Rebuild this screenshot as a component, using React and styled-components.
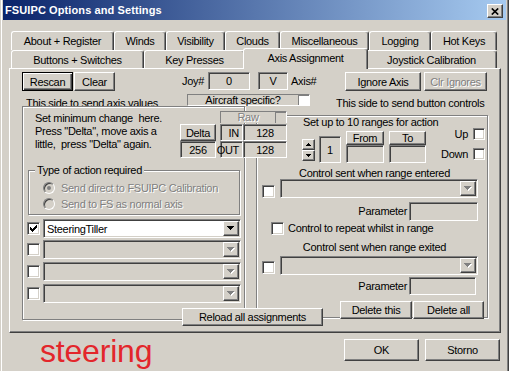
import React from 'react';
import styled, { createGlobalStyle, css } from 'styled-components';

const FACE = '#d4d0c8';
const SHADOW = '#808080';
const DARK = '#404040';

const GlobalStyle = createGlobalStyle`
  html, body { margin: 0; padding: 0; background: ${FACE}; }
  body {
    font-family: "Liberation Sans", Arial, sans-serif;
    font-size: 11px;
    letter-spacing: -0.3px;
    color: #000;
  }
  *, *::before, *::after { box-sizing: border-box; }
`;

const raised = css`
  border: 1px solid;
  border-color: #fff ${DARK} ${DARK} #fff;
  box-shadow: inset -1px -1px ${SHADOW};
  background: ${FACE};
`;
const sunken = css`
  border: 1px solid;
  border-color: ${SHADOW} #fff #fff ${SHADOW};
  box-shadow: inset 1px 1px ${DARK}, inset -1px -1px ${FACE};
`;
const etched = css`
  border: 1px solid ${SHADOW};
  box-shadow: inset 1px 1px #fff, 1px 1px #fff;
`;
const disabledText = css`
  color: ${SHADOW};
  text-shadow: 1px 1px #fff;
`;
const space = css`
  margin-left: ${p => p.$ml || 0}px;
  margin-top: ${p => p.$mt || 0}px;
`;

const Window = styled.div`
  width: 509px;
  height: 371px;
  overflow: hidden;
  background: ${FACE};
  display: flex;
  flex-direction: column;
  box-shadow: inset 1px 0 ${FACE}, inset 2px 0 #fff, inset -1px 0 ${DARK}, inset -2px 0 ${SHADOW};
`;

const TitleBar = styled.div`
  flex-shrink: 0;
  height: 20px;
  margin: 0 3px;
  padding: 0 3px 0 2px;
  display: flex;
  align-items: flex-start;
  background: linear-gradient(to right, #0a246a 0%, #a6caf0 100%);
`;
const TitleText = styled.span`
  color: #fff;
  font-weight: bold;
  font-size: 11px;
  letter-spacing: 0.1px;
  line-height: 20px;
`;
const CloseBox = styled.div`
  margin-left: auto;
  margin-top: 4px;
  width: 16px;
  height: 14px;
  ${raised};
  display: flex;
  align-items: center;
  justify-content: center;
`;

const TabStrip = styled.div`
  position: relative;
  z-index: 1;
  margin-top: 11px;
  display: flex;
  flex-direction: column;
  flex-shrink: 0;
`;
const TabRow = styled.div`
  display: flex;
  align-items: flex-end;
  margin-left: 11px;
  height: ${p => p.$h}px;
`;
const Tab = styled.div`
  position: relative;
  flex-shrink: 0;
  width: ${p => p.$w + (p.$active ? 4 : 0)}px;
  height: ${p => (p.$active ? 21 : p.$h)}px;
  border-top: 1px solid #fff;
  border-left: 1px solid #fff;
  border-right: 1px solid ${DARK};
  box-shadow: inset -1px 0 ${SHADOW};
  border-radius: 3px 3px 0 0;
  background: ${FACE};
  display: flex;
  align-items: center;
  justify-content: center;
  white-space: nowrap;
  ${p => p.$active && css`
    margin: 0 -2px -1px;
    z-index: 2;
    padding-bottom: 3px;
  `}
`;

const Panel = styled.div`
  flex-shrink: 0;
  margin-left: 9px;
  width: 492px;
  height: 265px;
  border-top: 1px solid #fff;
  border-left: 1px solid #fff;
  border-right: 1px solid ${DARK};
  border-bottom: 1px solid ${DARK};
  box-shadow: inset -1px -1px ${SHADOW};
  display: flex;
  flex-direction: column;
`;

const Row = styled.div`
  ${space};
  display: flex;
  align-items: flex-start;
  flex-shrink: 0;
  height: ${p => p.$h}px;
`;

const Button = styled.div`
  ${space};
  flex-shrink: 0;
  width: ${p => (p.$w ? `${p.$w}px` : 'auto')};
  height: ${p => p.$h || 19}px;
  ${raised};
  display: flex;
  align-items: center;
  justify-content: center;
  white-space: nowrap;
  ${p => p.$default && css`
    border-color: #000;
    box-shadow: inset 1px 1px #fff, inset -1px -1px ${DARK}, inset -2px -2px ${SHADOW};
  `}
  ${p => p.$disabled && disabledText}
  ${p => p.$area && `grid-area: ${p.$area};`}
`;

const Field = styled.div`
  ${space};
  flex-shrink: 0;
  width: ${p => (p.$w ? `${p.$w}px` : 'auto')};
  height: ${p => (p.$h ? `${p.$h}px` : 'auto')};
  ${sunken};
  background: ${p => (p.$white ? '#fff' : FACE)};
  display: flex;
  align-items: center;
  justify-content: ${p => p.$justify || 'center'};
  padding: 0 3px;
  ${p => p.$area && `grid-area: ${p.$area};`}
`;

const Label = styled.div`
  ${space};
  flex-shrink: 0;
  width: ${p => (p.$w ? `${p.$w}px` : 'auto')};
  line-height: ${p => p.$lh || 13}px;
  text-align: ${p => p.$align || 'left'};
  padding-left: ${p => p.$pl || 0}px;
  white-space: pre;
  ${p => p.$disabled && disabledText}
`;

const AircraftBox = styled.div`
  flex-shrink: 0;
  width: 123px;
  height: 12px;
  border-top: 1px solid ${SHADOW};
  border-left: 1px solid ${SHADOW};
  border-bottom: 1px solid #fff;
  border-right: 1px solid #fff;
  display: flex;
  align-items: center;
`;
const BoxText = styled.span`
  flex: 1;
  text-align: center;
  line-height: 10px;
  ${p => p.$disabled && disabledText}
`;
const MiniCheck = styled.div`
  flex-shrink: 0;
  width: 11px;
  height: 100%;
  background: ${p => (p.$white ? '#fff' : FACE)};
  border-left: 1px solid ${SHADOW};
  border-top: 1px solid ${SHADOW};
`;

const Body = styled.div`
  flex-shrink: 0;
  display: flex;
  align-items: flex-start;
  margin-left: 12px;
  height: 214px;
`;
const LeftFrame = styled.div`
  flex-shrink: 0;
  width: 223px;
  height: 214px;
  ${etched};
  display: flex;
  flex-direction: column;
`;
const RightFrame = styled.div`
  flex-shrink: 0;
  margin-left: 11px;
  margin-top: 9px;
  width: 232px;
  height: 203px;
  ${etched};
  display: flex;
  flex-direction: column;
`;

const DeltaGrid = styled.div`
  position: relative;
  z-index: 2;
  flex-shrink: 0;
  margin-top: 4px;
  display: grid;
  grid-template-columns: 36px 4px 23px 44px;
  grid-template-rows: 12px 1px 17px 17px;
`;
const RawBox = styled.div`
  grid-area: 1 / 3 / 2 / 5;
  border-top: 1px solid ${SHADOW};
  border-left: 1px solid ${SHADOW};
  border-right: 1px solid #fff;
  background: ${FACE};
  display: flex;
  align-items: stretch;
`;

const GroupBox = styled.div`
  ${space};
  position: relative;
  flex-shrink: 0;
  width: ${p => p.$w}px;
  height: ${p => p.$h}px;
  ${etched};
  display: flex;
  flex-direction: column;
`;
const Legend = styled.span`
  position: absolute;
  top: -7px;
  left: 6px;
  padding: 0 2px;
  line-height: 13px;
  background: ${FACE};
  white-space: nowrap;
`;
const RadioCircle = styled.div`
  ${space};
  flex-shrink: 0;
  width: 12px;
  height: 12px;
  border-radius: 50%;
  border: 1px solid;
  border-color: ${SHADOW} #fff #fff ${SHADOW};
  box-shadow: inset 1px 1px ${DARK};
  background: ${FACE};
  display: flex;
  align-items: center;
  justify-content: center;
`;
const RadioDot = styled.div`
  width: 4px;
  height: 4px;
  border-radius: 50%;
  background: ${SHADOW};
`;

const CheckBox = styled.div`
  ${space};
  flex-shrink: 0;
  width: ${p => p.$s || 13}px;
  height: ${p => p.$s || 13}px;
  ${sunken};
  background: #fff;
  display: flex;
  align-items: center;
  justify-content: center;
`;

const ComboFrame = styled.div`
  ${space};
  flex-shrink: 0;
  width: ${p => p.$w}px;
  height: 19px;
  ${sunken};
  background: ${p => (p.$disabled ? FACE : '#fff')};
  display: flex;
  align-items: center;
  padding-left: 3px;
`;
const DropBtn = styled.div`
  margin-left: auto;
  margin-right: 1px;
  width: 16px;
  height: 15px;
  ${raised};
  display: flex;
  align-items: center;
  justify-content: center;
`;

const SpinCol = styled.div`
  ${space};
  flex-shrink: 0;
  display: flex;
  flex-direction: column;
  width: 13px;
`;
const SpinBtn = styled.div`
  height: 11px;
  ${raised};
  display: flex;
  align-items: center;
  justify-content: center;
`;
const StackCol = styled.div`
  ${space};
  flex-shrink: 0;
  width: ${p => p.$w}px;
  display: flex;
  flex-direction: column;
  align-items: ${p => p.$align || 'stretch'};
`;

const BottomRow = styled.div`
  flex-shrink: 0;
  margin-top: 6px;
  height: 22px;
  padding-right: 9px;
  display: flex;
  align-items: flex-start;
`;
const Brand = styled.div`
  margin-left: 40px;
  margin-top: -4px;
  font-size: 32px;
  line-height: 32px;
  letter-spacing: -0.2px;
  color: #e3262b;
`;
const Spacer = styled.div`
  flex: 1;
`;

const CheckMark = () => (
  <svg width="7" height="7" viewBox="0 0 7 7" shapeRendering="crispEdges">
    <path
      fill="#000"
      d="M6 0h1v1H6z M5 1h2v1H5z M0 2h1v1H0z M4 2h3v1H4z M0 3h2v1H0z M3 3h3v1H3z M0 4h5v1H0z M1 5h3v1H1z M2 6h1v1H2z"
    />
  </svg>
);

const DownArrow = ({ disabled }) => (
  <svg width="8" height="5" viewBox="0 0 8 5" shapeRendering="crispEdges">
    {disabled && <path fill="#fff" d="M1 1h7v1H1z M2 2h5v1H2z M3 3h3v1H3z M4 4h1v1H4z" />}
    <path
      fill={disabled ? SHADOW : '#000'}
      d="M0 0h7v1H0z M1 1h5v1H1z M2 2h3v1H2z M3 3h1v1H3z"
    />
  </svg>
);

const SpinArrow = ({ up }) => (
  <svg width="5" height="3" viewBox="0 0 5 3" shapeRendering="crispEdges">
    <path
      fill="#000"
      d={up ? 'M2 0h1v1H2z M1 1h3v1H1z M0 2h5v1H0z' : 'M0 0h5v1H0z M1 1h3v1H1z M2 2h1v1H2z'}
    />
  </svg>
);

const CloseGlyph = () => (
  <svg width="8" height="7" viewBox="0 0 8 7">
    <path d="M0.8 0.5 L7.2 6.5 M7.2 0.5 L0.8 6.5" stroke="#000" strokeWidth="1.7" />
  </svg>
);

const Combo = ({ w, ml, mt, value, disabled }) => (
  <ComboFrame $w={w} $ml={ml} $mt={mt} $disabled={disabled}>
    {value}
    <DropBtn>
      <DownArrow disabled={disabled} />
    </DropBtn>
  </ComboFrame>
);

const Check = ({ checked, ml, mt, s }) => (
  <CheckBox $ml={ml} $mt={mt} $s={s}>{checked && <CheckMark />}</CheckBox>
);

const tabsBack = [
  ['About + Register', 103],
  ['Winds', 52],
  ['Visibility', 59],
  ['Clouds', 55],
  ['Miscellaneous', 89],
  ['Logging', 62],
  ['Hot Keys', 66],
];
const tabsFront = [
  ['Buttons + Switches', 133],
  ['Key Presses', 101],
  ['Axis Assignment', 121, true],
  ['Joystick Calibration', 131],
];

const comboRows = [
  { checked: true, value: 'SteeringTiller', disabled: false, mt: 4 },
  { checked: false, value: '', disabled: true, mt: 2 },
  { checked: false, value: '', disabled: true, mt: 3 },
  { checked: false, value: '', disabled: true, mt: 3 },
];

export default function App() {
  return (
    <>
      <GlobalStyle />
      <Window>
        <TitleBar>
          <TitleText>FSUIPC Options and Settings</TitleText>
          <CloseBox>
            <CloseGlyph />
          </CloseBox>
        </TitleBar>

        <TabStrip>
          <TabRow $h={19}>
            {tabsBack.map(([t, w]) => (
              <Tab key={t} $w={w} $h={19}>{t}</Tab>
            ))}
          </TabRow>
          <TabRow $h={18}>
            {tabsFront.map(([t, w, a]) => (
              <Tab key={t} $w={w} $h={18} $active={a}>{t}</Tab>
            ))}
          </TabRow>
        </TabStrip>

        <Panel>
          <Row $mt={3} $h={19}>
            <Button $ml={12} $w={51} $default>Rescan</Button>
            <Button $ml={1} $w={41}>Clear</Button>
            <Label $ml={61} $w={28} $lh={19} $align="right">Joy#</Label>
            <Field $ml={4} $w={42} $h={18}>0</Field>
            <Field $ml={8} $w={30} $h={18}>V</Field>
            <Label $ml={3} $w={32} $lh={19}>Axis#</Label>
            <Button $ml={22} $w={76}>Ignore Axis</Button>
            <Button $ml={3} $w={63} $disabled>Clr Ignores</Button>
          </Row>

          <Row $mt={3} $h={12}>
            <Label $ml={16} $mt={3} $w={161}>This side to send axis values</Label>
            <AircraftBox>
              <BoxText>Aircraft specific?</BoxText>
              <MiniCheck $white />
            </AircraftBox>
            <Label $ml={26} $mt={3}>This side to send button controls</Label>
          </Row>

          <Body>
            <LeftFrame>
              <Row $h={52}>
                <Label $ml={12} $mt={5} $w={145}>
                  {'Set minimum change  here.\nPress "Delta", move axis a\nlittle,  press "Delta" again.'}
                </Label>
                <DeltaGrid>
                  <RawBox>
                    <BoxText $disabled>Raw</BoxText>
                    <MiniCheck />
                  </RawBox>
                  <Button $area="3 / 1 / 4 / 2" $h={17}>Delta</Button>
                  <Field $area="3 / 3 / 4 / 4" $justify="flex-end">IN</Field>
                  <Field $area="3 / 4 / 4 / 5">128</Field>
                  <Field $area="4 / 1 / 5 / 2">256</Field>
                  <Field $area="4 / 3 / 5 / 4" $justify="flex-end">OUT</Field>
                  <Field $area="4 / 4 / 5 / 5">128</Field>
                </DeltaGrid>
              </Row>

              <GroupBox $ml={5} $mt={11} $w={212} $h={45}>
                <Legend>Type of action required</Legend>
                <Row $mt={11} $h={12}>
                  <RadioCircle $ml={14}><RadioDot /></RadioCircle>
                  <Label $ml={6} $lh={12} $disabled>Send direct to FSUIPC Calibration</Label>
                </Row>
                <Row $mt={4} $h={12}>
                  <RadioCircle $ml={14} />
                  <Label $ml={6} $lh={12} $disabled>Send to FS as normal axis</Label>
                </Row>
              </GroupBox>

              {comboRows.map((r, i) => (
                <Row key={i} $mt={r.mt} $h={19}>
                  <Check ml={4} mt={3} checked={r.checked} />
                  <Combo ml={3} w={198} value={r.value} disabled={r.disabled} />
                </Row>
              ))}
            </LeftFrame>

            <RightFrame>
              <Label $ml={46} $lh={12}>Set up to 10 ranges for action</Label>
              <Row $h={35}>
                <SpinCol $ml={45} $mt={11}>
                  <SpinBtn><SpinArrow up /></SpinBtn>
                  <SpinBtn><SpinArrow /></SpinBtn>
                </SpinCol>
                <Field $ml={4} $mt={8} $w={22} $h={27}>1</Field>
                <StackCol $ml={5} $mt={3} $w={38}>
                  <Button $h={14}>From</Button>
                  <Field $h={18} />
                </StackCol>
                <StackCol $ml={5} $mt={3} $w={37}>
                  <Button $h={14}>To</Button>
                  <Field $h={18} />
                </StackCol>
                <StackCol $ml={4} $w={55} $align="flex-end">
                  <Row $h={12}>
                    <Label $lh={12}>Up</Label>
                    <Check ml={5} s={12} />
                  </Row>
                  <Row $mt={8} $h={12}>
                    <Label $lh={12}>Down</Label>
                    <Check ml={5} s={12} />
                  </Row>
                </StackCol>
              </Row>

              <Label $mt={5} $lh={11} $align="center" $pl={5}>Control sent when range entered</Label>
              <Row $h={19}>
                <Check ml={5} mt={6} />
                <Combo ml={5} w={198} disabled />
              </Row>
              <Row $mt={4} $h={19}>
                <Label $ml={93} $w={57} $lh={19} $align="right">Parameter</Label>
                <Field $ml={2} $w={69} $h={19} />
              </Row>
              <Row $mt={1} $h={13}>
                <Check ml={14} />
                <Label $ml={4} $lh={13}>Control to repeat whilst in range</Label>
              </Row>
              <Label $mt={7} $lh={11} $align="center" $pl={5}>Control sent when range exited</Label>
              <Row $mt={3} $h={19}>
                <Check ml={5} mt={5} />
                <Combo ml={5} w={198} disabled />
              </Row>
              <Row $mt={2} $h={18}>
                <Label $ml={93} $w={57} $lh={18} $align="right">Parameter</Label>
                <Field $ml={2} $w={67} $h={18} />
              </Row>
              <Row $mt={6} $h={18}>
                <Button $ml={83} $w={72} $h={18}>Delete this</Button>
                <Button $ml={1} $w={71} $h={18}>Delete all</Button>
              </Row>
            </RightFrame>
          </Body>

          <Row $mt={-12} $h={18}>
            <Button $ml={172} $w={141} $h={18}>Reload all assignments</Button>
          </Row>
        </Panel>

        <BottomRow>
          <Brand>steering</Brand>
          <Spacer />
          <Button $w={75} $h={22}>OK</Button>
          <Button $ml={6} $w={75} $h={22}>Storno</Button>
        </BottomRow>
      </Window>
    </>
  );
}
